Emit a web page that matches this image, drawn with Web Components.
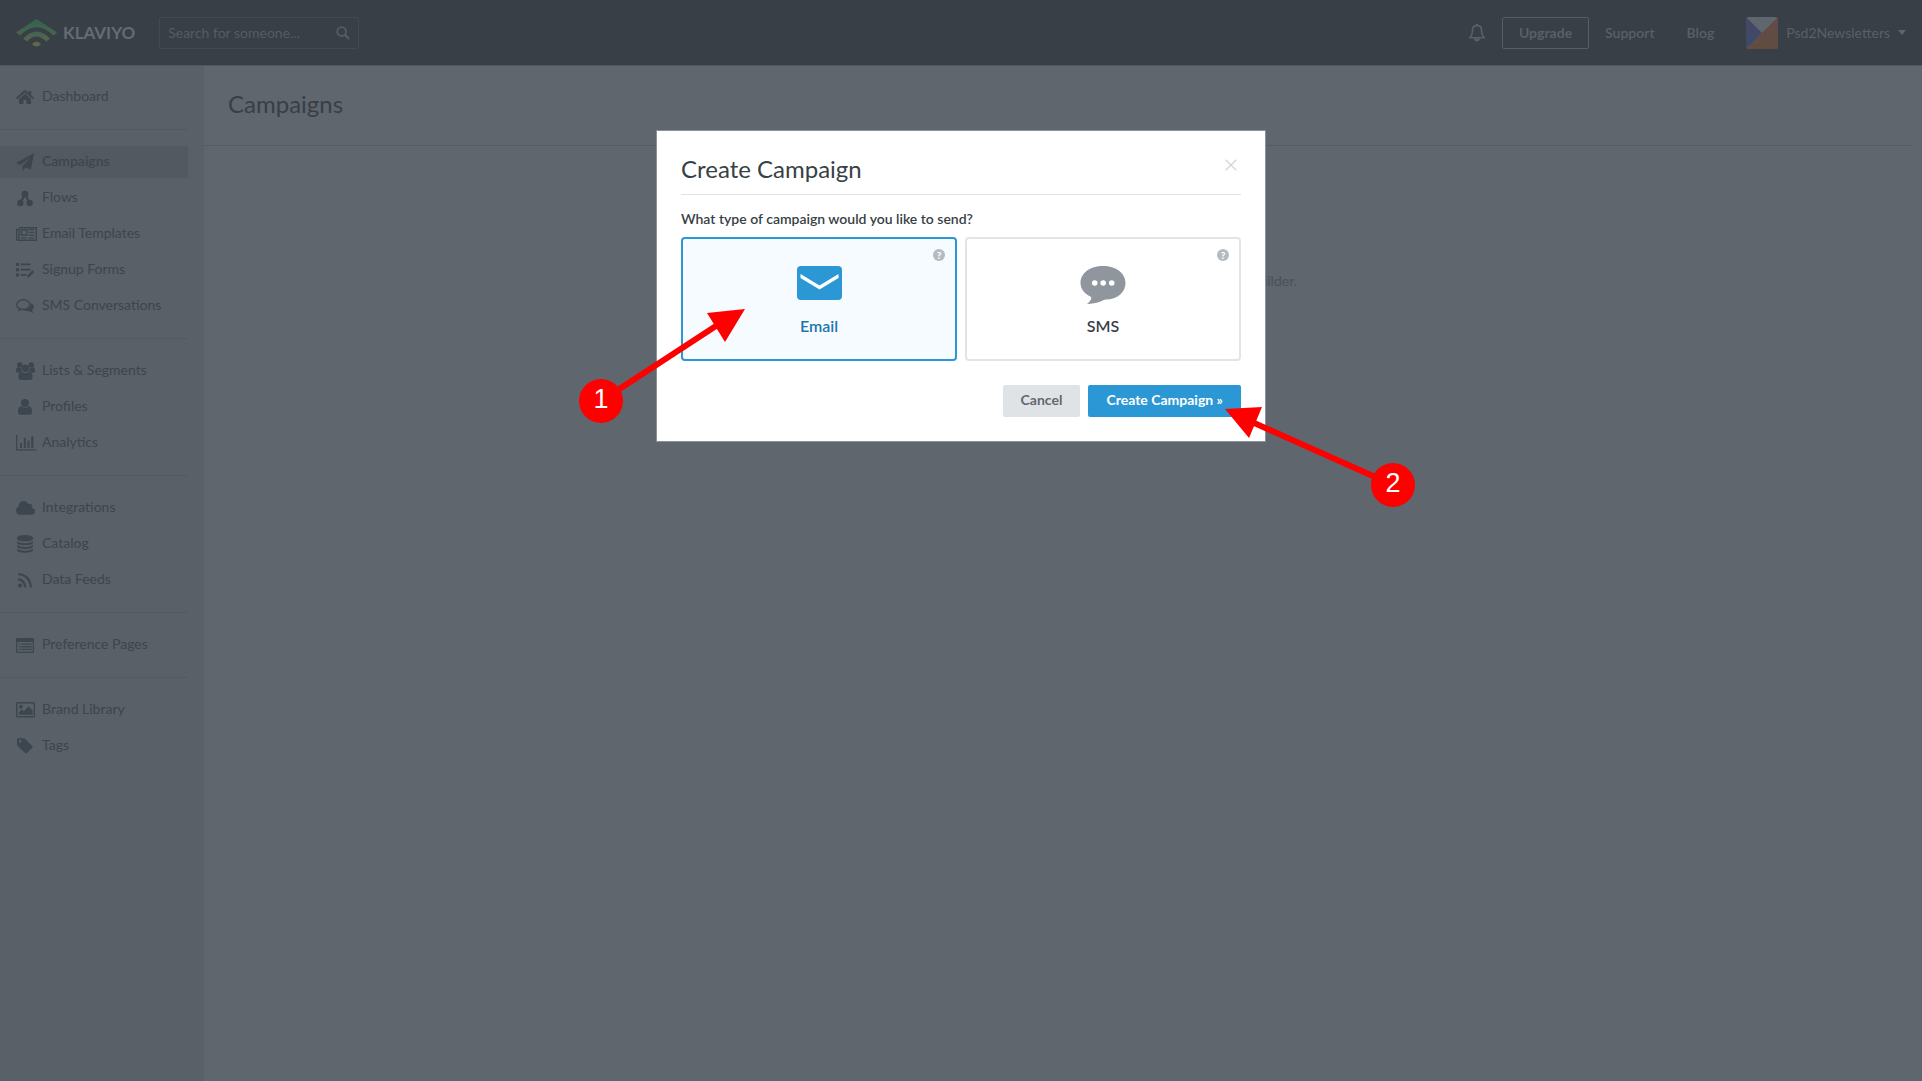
<!DOCTYPE html>
<html lang="en">
<head>
<meta charset="utf-8">
<title>Campaigns | Klaviyo</title>
<style>
html, body { margin: 0; }
body {
  font: 14px/20px Lato, "Open Sans", sans-serif;
  color: #383f46;
  background: #5f666d;
}
</style>
</head>
<body>
<klaviyo-app>
  <app-header slot="header"></app-header>
  <side-nav slot="nav">
    <nav-group>
      <nav-item icon="home">Dashboard</nav-item>
    </nav-group>
    <nav-group>
      <nav-item icon="plane" active>Campaigns</nav-item>
      <nav-item icon="flows">Flows</nav-item>
      <nav-item icon="templates">Email Templates</nav-item>
      <nav-item icon="forms">Signup Forms</nav-item>
      <nav-item icon="chats">SMS Conversations</nav-item>
    </nav-group>
    <nav-group>
      <nav-item icon="group">Lists &amp; Segments</nav-item>
      <nav-item icon="user">Profiles</nav-item>
      <nav-item icon="chart">Analytics</nav-item>
    </nav-group>
    <nav-group>
      <nav-item icon="cloud">Integrations</nav-item>
      <nav-item icon="database">Catalog</nav-item>
      <nav-item icon="rss">Data Feeds</nav-item>
    </nav-group>
    <nav-group>
      <nav-item icon="list">Preference Pages</nav-item>
    </nav-group>
    <nav-group last>
      <nav-item icon="image">Brand Library</nav-item>
      <nav-item icon="tag">Tags</nav-item>
    </nav-group>
  </side-nav>
  <page-content heading="Campaigns">builder.</page-content>
</klaviyo-app>

<modal-dialog heading="Create Campaign">
  <type-picker label="What type of campaign would you like to send?">
    <type-card icon="mail" selected>Email</type-card>
    <type-card icon="bubble">SMS</type-card>
  </type-picker>
  <action-button slot="actions">Cancel</action-button>
  <action-button slot="actions" primary>Create Campaign »</action-button>
  <step-arrows slot="notes"></step-arrows>
</modal-dialog>

<script>
// [width, height, markup]
const icons = {
  home: [20, 16, `<path d="M9 1.2 18 8.8l-1.2 1.4L9 3.6 1.2 10.2 0 8.8 7.8 1.5Q9 .4 10.2 1.5l2.6 2.3V2h2.4v4l2.8 2.6z"/><path d="M9 4.8l6 5.1V15h-4.5v-4h-3v4H3V9.9z"/>`],
  plane: [20, 19, `<path d="M18 0 0 10l4.3 2L14.600 4 6.400 13.200V18l2.900-3.600L14.800 16.600z"/>`],
  flows: [20, 17, `<circle cx="9" cy="4" r="3.3"/><circle cx="4.4" cy="13" r="3.2"/><circle cx="13.6" cy="13" r="3.2"/><path d="M9 4 4.4 13M9 4l4.6 9" stroke="currentColor" stroke-width="2.2"/>`],
  templates: [21, 14, `<path d="M3 .7h17.3v12.6H2.2Q.7 13.3.7 11.8V2.4H3v9.2q0 1.7-1 1.7" fill="none" stroke="currentColor" stroke-width="1.4"/><path d="M5.4 3H11v5H5.4z" fill="none" stroke="currentColor" stroke-width="1.4"/><path d="M12.7 2.6h5.4M12.7 5.4h5.4M12.7 8.2h5.4M5 10.9h6M12.7 10.9h5.4" stroke="currentColor" stroke-width="1.3"/>`],
  forms: [19, 15, `<path d="M0 0h3v3H0zM0 5.2h3v3H0zM0 10.4h3v3H0zM4.6.6h10v1.7h-10zM4.6 5.8h10v1.7h-10zM4.6 11h5.8v1.7H4.6zM11 14.8l.6-2.5 5-5 1.7 1.7-5 5z"/>`],
  chats: [19, 15, `<ellipse cx="7.3" cy="5.7" rx="6.5" ry="4.9" fill="none" stroke="currentColor" stroke-width="1.5"/><path d="M3.2 9.2Q3 11 1.600 12.400q2.600-.2 4.200-2.100z"/><path d="M15.300 4.200q2.900 1.300 2.700 3.900-.2 1.900-2 3 .3 1.400 1.500 2.800-2.400-.2-4-1.900-3.300.5-5.300-1Q14.600 10.800 15.300 4.200z"/>`],
  group: [20, 18, `<circle cx="3.8" cy="3" r="2.7"/><circle cx="15.3" cy="3" r="2.7"/><circle cx="9.5" cy="6.3" r="3.7"/><path d="M4.9 5.9Q5 8 6.5 9.5 4.2 9.5 3.3 10.8H1.8Q0 10.800 0 9.100 0 5.200 2 5.200 3.500 6.400 4.900 5.900zM14.200 5.900q1.400.5 2.900-.7 1.900 0 1.900 3.900 0 1.700-1.800 1.700h-1.500q-.9-1.300-3.200-1.300Q14 8 14.200 5.900z"/><path d="M5.700 9.800q3.800 2.600 7.600 0 3.500.4 3.300 5.700 0 2.400-2.400 2.400H4.800q-2.400 0-2.400-2.400-.2-5.300 3.300-5.700z"/>`],
  user: [19, 16, `<circle cx="9" cy="4" r="4"/><path d="M5.300 7.300q3.700 3 7.400 0 3.500.3 3.300 5.600 0 2.900-2.700 2.900H4.700Q2 15.800 2 12.900q-.2-5.300 3.300-5.600z"/>`],
  chart: [21, 16, `<path d="M0 0h1.300v14.300H20.500v1.300H0zM4 8h2v5H4zM7.800 2.800h2V13h-2zM11.500 5.400h2V13h-2zM15.200 1.500h2.200V13h-2.200z"/>`],
  cloud: [20, 14, `<path d="M4.300 13.800Q0 13.600 0 9.500 0 6.700 2.700 5.500 2.800.2 7.600.1q3.300 0 4.700 2.900 3.600-1.400 4 2.500-.2.900-.6 1.400Q19 7.500 19 10.300q-.1 3.300-3.700 3.500z"/>`],
  database: [19, 18, `<path d="M1 3Q1.300 0 9 0t8 3v1Q16.500 6.300 9 6.300T1 4zM1 6q2.500 2.200 8 2.200T17 6v1.700Q16.500 10.200 9 10.200T1 7.700zM1 9.800Q3.500 12 9 12t8-2.200v1.700Q16.500 14 9 14t-8-2.500zM1 13.600q2.500 2.200 8 2.200t8-2.200V15q-.5 2.800-8 2.800T1 15z"/>`],
  rss: [19, 15, `<circle cx="4" cy="12.6" r="2.1"/><path d="M2.200 6.300q6.400.4 7 8.200M2.200 1.100Q13.900 1.800 14.900 14.500" fill="none" stroke="currentColor" stroke-width="2.2"/>`],
  list: [19, 15, `<rect x=".6" y=".6" width="16.8" height="13.8" rx="1.3" fill="none" stroke="currentColor" stroke-width="1.3"/><path d="M.6.6h16.800V4H.6zM2.800 5.500h1.500v1.300H2.800zM5.200 5.500h10.500v1.300H5.200zM2.800 8.100h1.500v1.300H2.800zM5.200 8.100h10.500v1.300H5.200zM2.800 10.700h1.500V12H2.800zM5.200 10.700h10.500V12H5.200z"/>`],
  image: [20, 16, `<rect x=".7" y=".7" width="17.6" height="14.1" rx=".8" fill="none" stroke="currentColor" stroke-width="1.4"/><circle cx="4.9" cy="4.7" r="1.9"/><path d="M2.900 12.700v-2.500l3-2.800 2 1.800 4.600-5 4.100 4.300v4.200z"/>`],
  tag: [19, 16, `<path fill-rule="evenodd" d="M1 1.200Q1 .2 2.300.2h5q1.100 0 2 .9l7 6.800q.9.900 0 1.900L11 15q-.9.900-1.900 0L1.800 8Q1 7.200 1 6zM4.200 2A1.400 1.400 0 1 0 4.200 4.800 1.400 1.400 0 1 0 4.200 2z"/>`],
  search: [14, 14, `<circle cx="5.6" cy="5.6" r="4.4" fill="none" stroke="currentColor" stroke-width="1.8"/><path d="M8.800 8.800l3.600 3.600" stroke="currentColor" stroke-width="2.2" stroke-linecap="round"/>`],
  bell: [18, 20, `<path d="M9 2.400q4.300.3 4.600 5 0 5 2.800 7.400H1.600Q4.400 12.400 4.400 7.400 4.700 2.700 9 2.400z" fill="none" stroke="currentColor" stroke-width="1.6" stroke-linejoin="round"/><path d="M6 15.500h6q-.5 3-3 3t-3-3zM8 .8h2V3H8z"/>`],
  mail: [46, 40, `<rect x="1" y="1" width="45" height="34" rx="4"/><path d="M4.500 9 23.500 20.500 42.500 9v4L23.500 24.500 4.500 13z" fill="#fff"/>`],
  bubble: [46, 40, `<path d="M23 1C36 1 45.500 8 45.500 18c0 9-8 16.500-20 16.500-3 .5-8 4.500-18.500 4.500 3.500-3 4.500-5 4.200-7C5 29 .5 24.500.5 18 .5 8 10 1 23 1z"/><g fill="#fff"><circle cx="14.700" cy="18" r="2.800"/><circle cx="23.200" cy="18" r="2.800"/><circle cx="31.700" cy="18" r="2.800"/></g>`],
  close: [12, 12, `<path d="M.7.7l10.600 10.600M11.300.7.7 11.300" stroke="currentColor" stroke-width="1.4"/>`],
  logo: [42, 28, `<defs><linearGradient id="g" x1="0" y1="0" x2="0" y2="28" gradientUnits="userSpaceOnUse"><stop offset=".15" stop-color="#35644f"/><stop offset=".6" stop-color="#4b6450"/><stop offset="1" stop-color="#686a44"/></linearGradient></defs><g fill="url(#g)"><path d="M20.500 0 41 13.500 37.500 16.500Q20.500 0 4 16.500L0 13.500z"/><path d="M7.200 19.500Q20.500 5.500 34 19.500l-3.800 3Q20.500 12.500 11 22.500z"/><path d="M16 25q4.500-5 9 0-4.500 5-9 0z"/></g>`]
};

function icon(name) {
  const [w, h, body] = icons[name];
  return `<svg width="${w}" height="${h}" viewBox="0 0 ${w} ${h}" fill="currentColor" aria-hidden="true">${body}</svg>`;
}

// Attaches the shadow root and fills it with the styles and markup.
function render(el, css, html) {
  el.attachShadow({ mode: "open" });
  const template = document.createElement("template");
  template.innerHTML = `<style>
    *, :host { box-sizing: border-box; }
    svg { display: block; flex: none; }
    button, input { font: inherit; color: inherit; margin: 0; }
    button { cursor: pointer; }
    a { color: inherit; text-decoration: none; }
    ${css}</style>${html}`;
  el.shadowRoot.appendChild(template.content.cloneNode(true));
}

class KlaviyoApp extends HTMLElement {
  constructor() {
    super();
    render(this, `
      :host { display: flex; flex-direction: column; min-height: 100vh; }
      .body { display: flex; flex: 1; }
    `, `
      <slot name="header"></slot>
      <div class="body"><slot name="nav"></slot><slot></slot></div>
    `);
  }
}

class AppHeader extends HTMLElement {
  constructor() {
    super();
    render(this, `
      :host { position: relative; display: block; background: #383f46; color: #596068; box-shadow: 0 1px #4f565e; }
      header { display: flex; align-items: center; height: 65px; padding: 0 16px; font-weight: 600; }
      .logo { display: flex; align-items: center; gap: 5px; font-size: 17px; font-weight: 700; color: #656c73; }
      .search {
        display: flex; align-items: center; width: 200px; height: 32px; margin-left: 24px; padding: 0 8px;
        border: 1px solid #424950; border-radius: 2px; color: #555c64;
      }
      .search input { flex: 1; min-width: 0; padding: 0; border: 0; outline: 0; background: none; font-weight: 400; }
      .search input::placeholder { color: #555c64; opacity: 1; }
      .links { display: flex; align-items: center; margin-left: auto; }
      .bell { padding: 0; border: 0; background: none; }
      .upgrade { height: 32px; margin: 0 16px; padding: 0 16px; border: 1px solid #565d65; border-radius: 2px; background: none; font-weight: 700; }
      .blog { margin: 0 32px; }
      .account { display: flex; align-items: center; gap: 8px; padding: 0; border: 0; background: none; font-weight: 400; }
      .account::after { content: ""; border: 4px solid transparent; border-top: 5px solid #5f666d; border-bottom: 0; }
      .account svg { border-radius: 3px; }
    `, `
      <header>
        <a class="logo" href="#">${icon("logo")}<span>KLAVIYO</span></a>
        <label class="search">
          <input type="text" placeholder="Search for someone..." aria-label="Search for someone">
          ${icon("search")}
        </label>
        <nav class="links">
          <button class="bell" aria-label="Notifications">${icon("bell")}</button>
          <button class="upgrade">Upgrade</button>
          <a href="#">Support</a>
          <a class="blog" href="#">Blog</a>
          <button class="account">
            <svg width="32" height="32" viewBox="0 0 32 32" aria-hidden="true">
              <defs>
                <linearGradient id="blue" x1="0" y1="0" x2="0" y2="1"><stop offset="0" stop-color="#494768"/><stop offset="1" stop-color="#394a68"/></linearGradient>
                <linearGradient id="red" x1="0" y1="0" x2="0" y2="1"><stop offset="0" stop-color="#65494b"/><stop offset="1" stop-color="#604d3e"/></linearGradient>
              </defs>
              <path d="M0 0h32v32H0z" fill="#5f666e"/>
              <path d="M0 0l16 16L0 32z" fill="url(#blue)"/>
              <path d="M32 0v32H0z" fill="url(#red)"/>
            </svg>
            Psd2Newsletters
          </button>
        </nav>
      </header>
    `);
  }
}

class SideNav extends HTMLElement {
  constructor() {
    super();
    render(this, `
      :host { display: block; flex: none; width: 204px; padding-right: 16px; background: #596067; }
    `, `<nav><slot></slot></nav>`);
  }
}

class NavGroup extends HTMLElement {
  constructor() {
    super();
    render(this, `
      :host { display: flex; flex-direction: column; gap: 4px; padding: 16px 0; border-bottom: 1px solid #515961; }
      :host([last]) { border: 0; }
    `, `<slot></slot>`);
  }
}

class NavItem extends HTMLElement {
  constructor() {
    super();
    render(this, `
      :host { display: block; color: #3d454e; }
      :host([active]) { background: #525960; }
      a { display: flex; align-items: center; height: 32px; padding-left: 16px; }
      .icon { width: 26px; }
      .text { padding-bottom: 2px; }
      :host([active]) .text { font-weight: 600; }
    `, `<a href="#"><span class="icon">${icon(this.getAttribute("icon"))}</span><span class="text"><slot></slot></span></a>`);
  }
}

class PageContent extends HTMLElement {
  constructor() {
    super();
    render(this, `
      :host { display: block; flex: 1; }
      h1 { margin: 0 10px 0 0; padding: 23px 24px 25px; border-bottom: 1px solid #535b63; font-size: 24px; line-height: 32px; font-weight: 400; }
      p { width: 468px; margin: 125px auto 0; text-align: right; color: #4a525a; }
    `, `<main><h1>${this.getAttribute("heading")}</h1><p><slot></slot></p></main>`);
  }
}

class ModalDialog extends HTMLElement {
  constructor() {
    super();
    render(this, `
      :host { position: absolute; inset: 0 0 auto; display: flex; justify-content: center; padding-top: 130px; }
      section { position: relative; width: 610px; padding: 24px; border: 1px solid #8b9197; background: #fff; background-clip: padding-box; }
      header { display: flex; justify-content: space-between; padding-bottom: 11px; border-bottom: 1px solid #e1e4e7; }
      h2 { margin: 0; font-size: 24px; line-height: 28px; font-weight: 400; }
      header button { align-self: flex-start; padding: 4px; border: 0; background: none; color: #d3d6d9; }
      footer { display: flex; justify-content: flex-end; gap: 8px; margin-top: 24px; }
    `, `
      <section role="dialog" aria-labelledby="title">
        <header>
          <h2 id="title">${this.getAttribute("heading")}</h2>
          <button aria-label="Close">${icon("close")}</button>
        </header>
        <slot></slot>
        <footer><slot name="actions"></slot></footer>
        <slot name="notes"></slot>
      </section>
    `);
  }
}

class TypePicker extends HTMLElement {
  constructor() {
    super();
    render(this, `
      :host { display: block; padding-top: 14px; }
      p { margin: 0 0 8px; font-weight: 600; }
      .cards { display: flex; gap: 8px; }
    `, `<p id="label">${this.getAttribute("label")}</p><div class="cards" role="group" aria-labelledby="label"><slot></slot></div>`);

    this.addEventListener("click", (e) => {
      const card = e.target.closest("type-card");
      if (!card) {
        return;
      }
      this.querySelectorAll("type-card").forEach((c) => c.toggleAttribute("selected", c === card));
    });
  }
}

class TypeCard extends HTMLElement {
  constructor() {
    super();
    render(this, `
      :host { position: relative; display: flex; flex: 1; }
      .card {
        display: flex; flex: 1; flex-direction: column; align-items: center; gap: 10px; padding: 26px 0 22px;
        border: 2px solid #e1e5e8; border-radius: 4px; background: #fff; font-size: 16px; line-height: 22px; font-weight: 600;
      }
      .card svg { color: #8f969e; }
      :host([selected]) .card { border-color: #2b98d5; background: #f6fbff; color: #1c75ad; }
      :host([selected]) .card svg { color: #2b98d5; }
      .help {
        position: absolute; top: 12px; right: 12px; width: 12px; height: 12px; padding: 0;
        border: 0; border-radius: 50%; background: #b4bac3; color: #fff; font-size: 10px; line-height: 12px; font-weight: 900;
      }
    `, `
      <button class="card">${icon(this.getAttribute("icon"))}<span><slot></slot></span></button>
      <button class="help" aria-label="Help">?</button>
    `);
  }
}

class ActionButton extends HTMLElement {
  constructor() {
    super();
    render(this, `
      :host { display: block; }
      button { height: 32px; padding: 0 18px 2px; border: 0; border-radius: 2px; background: #dfe3e6; color: #5f6870; font-weight: 700; }
      :host([primary]) button { background: #2b98d5; color: #fff; }
    `, `<button><slot></slot></button>`);
  }
}

// Numbered pins with arrows, measured from the dialog's corner.
class StepArrows extends HTMLElement {
  constructor() {
    super();
    render(this, `
      :host { position: absolute; top: 0; left: 0; pointer-events: none; }
      svg { overflow: visible; }
      text { font: 27px "Liberation Sans", Arial, sans-serif; fill: #fff; text-anchor: middle; }
    `, `
      <svg width="1" height="1" fill="#f00">
        <path d="M-56 270 62 193M736 354 595 291" stroke="#f00" stroke-width="6"/>
        <path d="M88 178 50 182 68 211zM568 278 605 276 592 307z"/>
        <circle cx="-56" cy="270" r="22"/><text x="-56" y="277">1</text>
        <circle cx="736" cy="354" r="22"/><text x="736" y="361">2</text>
      </svg>
    `);
  }
}

customElements.define("klaviyo-app", KlaviyoApp);
customElements.define("app-header", AppHeader);
customElements.define("side-nav", SideNav);
customElements.define("nav-group", NavGroup);
customElements.define("nav-item", NavItem);
customElements.define("page-content", PageContent);
customElements.define("modal-dialog", ModalDialog);
customElements.define("type-picker", TypePicker);
customElements.define("type-card", TypeCard);
customElements.define("action-button", ActionButton);
customElements.define("step-arrows", StepArrows);
</script>
</body>
</html>
